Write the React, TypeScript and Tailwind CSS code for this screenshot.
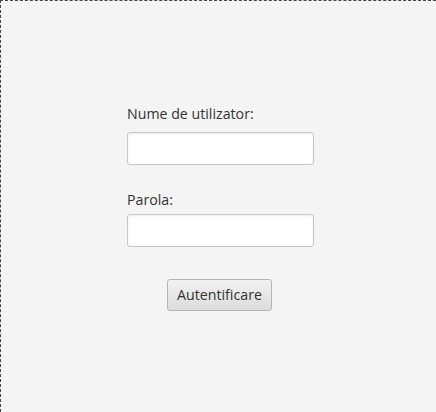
import React from "react";

export default function App() {
  return (
    <div
      className="w-[436px] h-[412px] bg-[#f4f4f4] border-l border-t border-dashed border-[#444] flex flex-col"
      style={{ fontFamily: '"Open Sans", "Noto Sans", sans-serif' }}
    >
      <div className="pl-[126px] pt-[103px] flex flex-col">
        <label className="text-[14.2px] leading-[20px] text-[#333] h-[20px]">Nume de utilizator:</label>
        <input
          type="text"
          className="mt-[8px] w-[187px] h-[33px] bg-white border border-[#c6c6c6] rounded-[3px] shadow-[inset_0_1px_2px_rgba(0,0,0,0.08)] outline-none"
        />
        <label className="mt-[25px] text-[14.2px] leading-[20px] text-[#333] h-[20px]">Parola:</label>
        <input
          type="password"
          className="mt-[4px] w-[187px] h-[33px] bg-white border border-[#c6c6c6] rounded-[3px] shadow-[inset_0_1px_2px_rgba(0,0,0,0.08)] outline-none"
        />
      </div>
      <div className="pl-[166px] pt-[32px]">
        <button className="w-[105px] h-[32px] rounded-[3px] border border-[#b4b4b4] bg-gradient-to-b from-[#f2f2f2] to-[#dcdcdc] text-[14.2px] text-[#333] flex items-center justify-center">
          Autentificare
        </button>
      </div>
    </div>
  );
}
